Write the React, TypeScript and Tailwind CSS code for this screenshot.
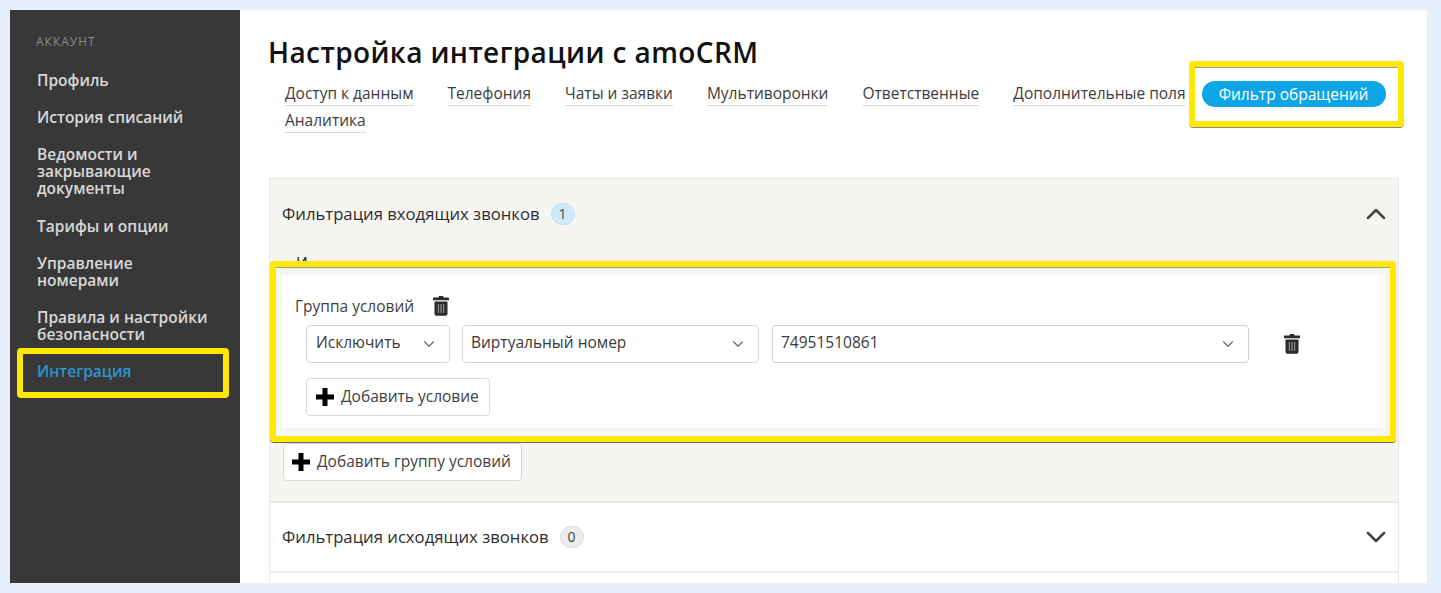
import { ChevronDown, ChevronUp } from "lucide-react";

const NAV = [
  { label: "Профиль", cls: "mt-[23px]" },
  { label: "История списаний", cls: "mt-5" },
  { label: "Ведомости и\nзакрывающие\nдокументы", cls: "mt-5" },
  { label: "Тарифы и опции", cls: "mt-[21px]" },
  { label: "Управление\nномерами", cls: "mt-5" },
  { label: "Правила и настройки\nбезопасности", cls: "mt-5" },
];

const TABS = ["Доступ к данным", "Телефония", "Чаты и заявки", "Мультиворонки", "Ответственные", "Дополнительные поля"];

function Trash({ className }: { className?: string }) {
  return (
    <svg viewBox="0 0 16 20" className={className} fill="#2b2b2b">
      <path d="M6 0h4l.6 1.600H15c.6 0 1 .4 1 1v1.600H0V2.600c0-.6.4-1 1-1h4.400z" />
      <path d="M1.500 5.400h13v12.400c0 1.200-.8 2-2 2h-9c-1.200 0-2-.8-2-2z" />
      <path d="M4.800 8h1.300v9H4.800zM7.350 8h1.300v9h-1.300zM9.900 8h1.300v9H9.900z" fill="#8a8a8a" />
    </svg>
  );
}

function Plus() {
  return (
    <svg viewBox="0 0 18 18" className="h-[18px] w-[18px] shrink-0" fill="#000">
      <path d="M6.500 0h5v6.500H18v5h-6.500V18h-5v-6.500H0v-5h6.500z" />
    </svg>
  );
}

function Select({ label, className }: { label: string; className: string }) {
  return (
    <div className={`flex h-[38px] items-center justify-between rounded border border-[#d4d4d4] bg-white pr-[11px] ${className}`}>
      <span className="-mt-[2px] text-[#3a3a3a]">{label}</span>
      <ChevronDown className="h-[18px] w-[18px] text-[#666]" strokeWidth={1.500} />
    </div>
  );
}

function AddButton({ label, className }: { label: string; className: string }) {
  return (
    <div className={`flex h-[38px] w-fit items-center gap-[7px] rounded border border-[#d8d8d8] bg-white pr-[10px] text-[#3f3f3f] ${className}`}>
      <Plus />
      {label}
    </div>
  );
}

export default function App() {
  return (
    <div className="h-[593px] w-[1441px] overflow-hidden bg-[#e6f0fb] pb-[10px] pl-[10px] pr-[14px] pt-[10px] font-['Open_Sans',sans-serif] text-[15.500px]">
      <div className="flex h-[573px] overflow-hidden bg-white">
        <aside className="relative w-[230px] shrink-0 bg-[#383838] pl-[27px] pt-[25px]">
          <div className="-ml-px text-[12px] leading-[14px] tracking-[1px] text-[#8a8a8a]">АККАУНТ</div>
          {NAV.map((item) => (
            <div key={item.label} className={`${item.cls} whitespace-pre-line font-semibold leading-[17px] text-[#d9d9d9]`}>
              {item.label}
            </div>
          ))}
          <div className="mt-5 font-semibold leading-[17px] text-[#2a97cd]">Интеграция</div>
          {/* yellow annotation */}
          <div className="absolute left-[7px] top-[338px] h-[50px] w-[212px] rounded-sm border-[6px] border-[#ffe900]" />
        </aside>

        <main className="relative min-w-0 flex-1 pl-[28px] pr-[29px]">
          <h1 className="mt-[24px] whitespace-nowrap text-[28px] font-semibold leading-[36px] tracking-[0.4px] text-[#111]">
            Настройка интеграции с amoCRM
          </h1>
          <div className="ml-px mt-[11px] flex gap-[34px] whitespace-nowrap pl-4 leading-[22px] text-[#3c3c3c]">
            {TABS.map((tab) => (
              <span key={tab} className="mt-px self-start border-b border-[#d9d9d9] pb-[1px]">{tab}</span>
            ))}
            <span className="-ml-[18px] flex h-[26px] w-[184px] shrink-0 items-center justify-center rounded-full bg-[#0ea5e4] text-white">
              Фильтр обращений
            </span>
          </div>
          <div className="ml-px mt-[2px] pl-4 leading-[22px] text-[#3c3c3c]">
            <span className="inline-block border-b border-[#d9d9d9] pb-[1px]">Аналитика</span>
          </div>

          <div className="ml-px mt-[45px] w-[1130px] border border-[#e8e8e6]">
            <section className="h-[324px] border-b-2 border-[#e8e8e6] bg-[#f6f5f2] pl-3">
              <div className="flex h-[70px] items-center justify-between pr-[6px]">
                <div className="flex items-center gap-[11px] text-[16.700px] text-[#2e2e2e]">
                  Фильтрация входящих звонков
                  <span className="flex h-[22px] w-[24px] items-center justify-center rounded-full border border-[#bfe3f2] bg-[#cdeaf7] text-[14px] text-[#444]">1</span>
                </div>
                <ChevronUp className="h-8 w-8 text-[#444]" strokeWidth={1.900} />
              </div>
              <div className="mb-[8px] h-[18px] pl-[14px] pt-[3px] leading-[22px] text-[#222]">И</div>
              <div className="relative h-[153px] w-[1103px] bg-white pl-[13px] pt-[21px] shadow-[0_-8px_0_#f6f5f2]">
                <div className="flex items-center gap-[19px] leading-[20px] text-[#3f3f3f]">
                  Группа условий
                  <Trash className="h-5 w-4" />
                </div>
                <div className="ml-[11px] mt-[9px] flex items-center">
                  <Select label="Исключить" className="w-[144px] pl-[9px]" />
                  <Select label="Виртуальный номер" className="ml-[12px] w-[297px] pl-[8px]" />
                  <Select label="74951510861" className="ml-[13px] w-[477px] pl-[8px]" />
                  <Trash className="ml-[35px] h-5 w-4" />
                </div>
                <div className="ml-[11px] mt-[15px]">
                  <AddButton label="Добавить условие" className="pl-[9px]" />
                </div>
              </div>
              <div className="ml-[1px] mt-[15px]">
                <AddButton label="Добавить группу условий" className="pl-2" />
              </div>
            </section>
            <section className="flex h-[70px] items-center justify-between border-b-2 border-[#ececec] pl-3 pr-[6px]">
              <div className="flex items-center gap-[11px] text-[16.700px] text-[#2e2e2e]">
                Фильтрация исходящих звонков
                <span className="flex h-[22px] w-[24px] items-center justify-center rounded-full border border-[#dcdcdc] bg-[#ececec] text-[14px] text-[#444]">0</span>
              </div>
              <ChevronDown className="h-8 w-8 text-[#444]" strokeWidth={1.900} />
            </section>
            <div className="h-[40px]" />
          </div>

          {/* yellow annotations */}
          <div className="absolute left-[949px] top-[51px] h-[66px] w-[215px] rounded-sm border-[6px] border-[#ffe900] shadow-[0_1px_0_#888,inset_0_1px_0_#999]" />
          <div className="absolute left-[30px] top-[251px] h-[181px] w-[1126px] rounded-sm border-[6px] border-[#ffe900] shadow-[0_1px_0_#666,inset_0_1px_0_#999]" />
        </main>
      </div>
    </div>
  );
}
